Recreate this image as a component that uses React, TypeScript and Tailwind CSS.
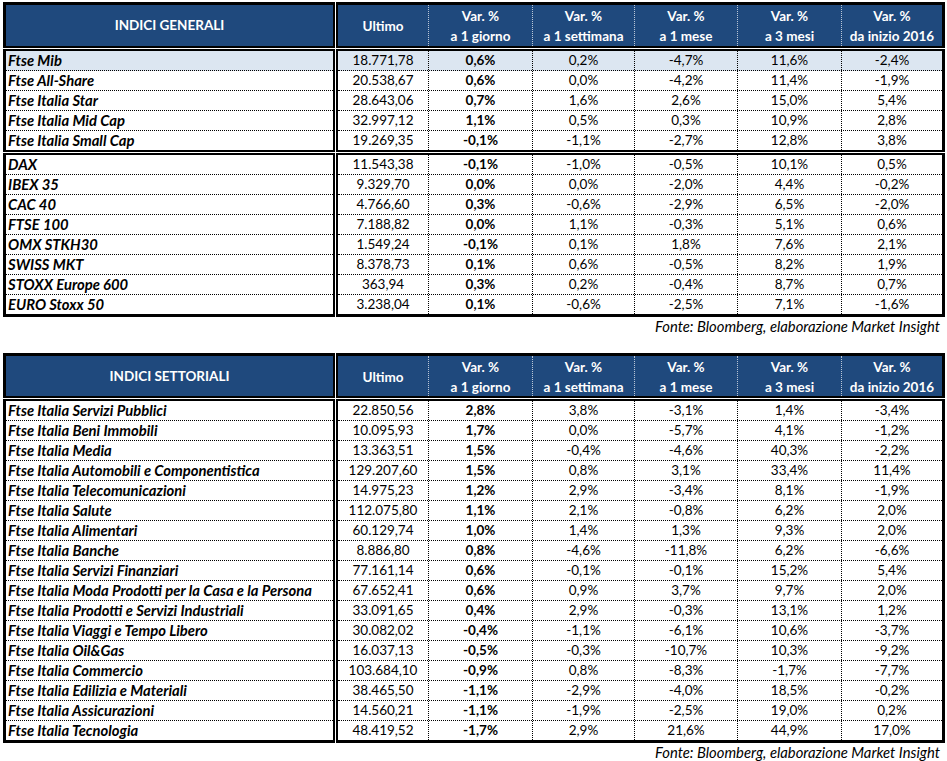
import React from 'react';

type Row = { name: string; values: string[]; highlight?: boolean };

const COLS = ['w-[91px]', 'w-[104px]', 'w-[102px]', 'w-[103px]', 'w-[104px]', 'w-[100px]'];

const HEAD: { top?: string; bottom: string }[] = [
    { bottom: 'Ultimo' },
    { top: 'Var. %', bottom: 'a 1 giorno' },
    { top: 'Var. %', bottom: 'a 1 settimana' },
    { top: 'Var. %', bottom: 'a 1 mese' },
    { top: 'Var. %', bottom: 'a 3 mesi' },
    { top: 'Var. %', bottom: 'da inizio 2016' },
];

const GENERALI: Row[][] = [
    [
        { name: 'Ftse Mib', values: ['18.771,78', '0,6%', '0,2%', '-4,7%', '11,6%', '-2,4%'], highlight: true },
        { name: 'Ftse All-Share', values: ['20.538,67', '0,6%', '0,0%', '-4,2%', '11,4%', '-1,9%'] },
        { name: 'Ftse Italia Star', values: ['28.643,06', '0,7%', '1,6%', '2,6%', '15,0%', '5,4%'] },
        { name: 'Ftse Italia Mid Cap', values: ['32.997,12', '1,1%', '0,5%', '0,3%', '10,9%', '2,8%'] },
        { name: 'Ftse Italia Small Cap', values: ['19.269,35', '-0,1%', '-1,1%', '-2,7%', '12,8%', '3,8%'] },
    ],
    [
        { name: 'DAX', values: ['11.543,38', '-0,1%', '-1,0%', '-0,5%', '10,1%', '0,5%'] },
        { name: 'IBEX 35', values: ['9.329,70', '0,0%', '0,0%', '-2,0%', '4,4%', '-0,2%'] },
        { name: 'CAC 40', values: ['4.766,60', '0,3%', '-0,6%', '-2,9%', '6,5%', '-2,0%'] },
        { name: 'FTSE 100', values: ['7.188,82', '0,0%', '1,1%', '-0,3%', '5,1%', '0,6%'] },
        { name: 'OMX STKH30', values: ['1.549,24', '-0,1%', '0,1%', '1,8%', '7,6%', '2,1%'] },
        { name: 'SWISS MKT', values: ['8.378,73', '0,1%', '0,6%', '-0,5%', '8,2%', '1,9%'] },
        { name: 'STOXX Europe 600', values: ['363,94', '0,3%', '0,2%', '-0,4%', '8,7%', '0,7%'] },
        { name: 'EURO Stoxx 50', values: ['3.238,04', '0,1%', '-0,6%', '-2,5%', '7,1%', '-1,6%'] },
    ],
];

const SETTORIALI: Row[][] = [
    [
        { name: 'Ftse Italia Servizi Pubblici', values: ['22.850,56', '2,8%', '3,8%', '-3,1%', '1,4%', '-3,4%'] },
        { name: 'Ftse Italia Beni Immobili', values: ['10.095,93', '1,7%', '0,0%', '-5,7%', '4,1%', '-1,2%'] },
        { name: 'Ftse Italia Media', values: ['13.363,51', '1,5%', '-0,4%', '-4,6%', '40,3%', '-2,2%'] },
        { name: 'Ftse Italia Automobili e Componentistica', values: ['129.207,60', '1,5%', '0,8%', '3,1%', '33,4%', '11,4%'] },
        { name: 'Ftse Italia Telecomunicazioni', values: ['14.975,23', '1,2%', '2,9%', '-3,4%', '8,1%', '-1,9%'] },
        { name: 'Ftse Italia Salute', values: ['112.075,80', '1,1%', '2,1%', '-0,8%', '6,2%', '2,0%'] },
        { name: 'Ftse Italia Alimentari', values: ['60.129,74', '1,0%', '1,4%', '1,3%', '9,3%', '2,0%'] },
        { name: 'Ftse Italia Banche', values: ['8.886,80', '0,8%', '-4,6%', '-11,8%', '6,2%', '-6,6%'] },
        { name: 'Ftse Italia Servizi Finanziari', values: ['77.161,14', '0,6%', '-0,1%', '-0,1%', '15,2%', '5,4%'] },
        { name: 'Ftse Italia Moda Prodotti per la Casa e la Persona', values: ['67.652,41', '0,6%', '0,9%', '3,7%', '9,7%', '2,0%'] },
        { name: 'Ftse Italia Prodotti e Servizi Industriali', values: ['33.091,65', '0,4%', '2,9%', '-0,3%', '13,1%', '1,2%'] },
        { name: 'Ftse Italia Viaggi e Tempo Libero', values: ['30.082,02', '-0,4%', '-1,1%', '-6,1%', '10,6%', '-3,7%'] },
        { name: 'Ftse Italia Oil&Gas', values: ['16.037,13', '-0,5%', '-0,3%', '-10,7%', '10,3%', '-9,2%'] },
        { name: 'Ftse Italia Commercio', values: ['103.684,10', '-0,9%', '0,8%', '-8,3%', '-1,7%', '-7,7%'] },
        { name: 'Ftse Italia Edilizia e Materiali', values: ['38.465,50', '-1,1%', '-2,9%', '-4,0%', '18,5%', '-0,2%'] },
        { name: 'Ftse Italia Assicurazioni', values: ['14.560,21', '-1,1%', '-1,9%', '-2,5%', '19,0%', '0,2%'] },
        { name: 'Ftse Italia Tecnologia', values: ['48.419,52', '-1,7%', '2,9%', '21,6%', '44,9%', '17,0%'] },
    ],
];

const Band: React.FC<{ rows: Row[]; edge: string }> = ({ rows, edge }) => (
    <div className="flex gap-px">
        {/* Label column */}
        <div className={`w-[332px] border-l-[3px] border-r-2 border-t-2 border-black ${edge}`}>
            {rows.map((row, i) => (
                <div
                    key={row.name}
                    className={`flex items-center pl-[2px] text-[14.8px] font-bold italic whitespace-nowrap ${i < rows.length - 1 ? 'h-[20px] border-b border-dotted border-black' : 'h-[19px]'} ${row.highlight ? 'bg-[#dce6f1]' : ''}`}
                >
                    {row.name}
                </div>
            ))}
        </div>
        {/* Numbers */}
        <div className={`w-[609px] border-l-2 border-r-[3px] border-t-2 border-black ${edge}`}>
            {rows.map((row, i) => (
                <div
                    key={row.name}
                    className={`flex ${i < rows.length - 1 ? 'h-[20px] border-b border-dotted border-black' : 'h-[19px]'} ${row.highlight ? 'bg-[#dce6f1]' : ''}`}
                >
                    {row.values.map((v, j) => (
                        <div
                            key={j}
                            className={`${COLS[j]} flex items-center justify-center ${j < 5 ? 'border-r border-dotted border-black' : ''} ${j === 1 ? 'font-bold' : ''}`}
                        >
                            {v}
                        </div>
                    ))}
                </div>
            ))}
        </div>
    </div>
);

const IndexTable: React.FC<{ title: string; groups: Row[][]; headHeight: string }> = ({ title, groups, headHeight }) => (
    <div className="flex flex-col gap-px">
        {/* Header */}
        <div className="flex gap-px">
            <div className={`w-[332px] ${headHeight} border-l-[3px] border-r-2 border-t-[3px] border-b-2 border-black bg-[#1f497d] flex items-center justify-center font-bold text-white`}>
                {title}
            </div>
            <div className={`w-[609px] ${headHeight} border-l-2 border-r-[3px] border-t-[3px] border-b-2 border-black bg-[#1f497d] flex font-bold text-white`}>
                {HEAD.map((h, j) => (
                    <div
                        key={j}
                        className={`${COLS[j]} flex flex-col justify-center items-center pt-px ${j < 5 ? 'border-r border-dotted border-white/70' : ''}`}
                    >
                        {h.top && <span className="h-[20px] leading-[20px]">{h.top}</span>}
                        <span className="h-[20px] leading-[20px]">{h.bottom}</span>
                    </div>
                ))}
            </div>
        </div>
        {groups.map((rows, g) => (
            <Band key={g} rows={rows} edge={g === groups.length - 1 ? 'border-b-[3px]' : 'border-b-2'} />
        ))}
    </div>
);

const Source: React.FC = () => (
    <div className="w-[941px] h-[18px] flex items-center justify-end pr-[4px] text-[14.8px] italic">
        Fonte: Bloomberg, elaborazione Market Insight
    </div>
);

const App: React.FC = () => {
    return (
        <div className="bg-white w-[947px] h-[761px] pl-[3px] pt-[2px] text-black text-[13.5px]" style={{ fontFamily: 'Lato, "Open Sans", sans-serif' }}>
            <IndexTable title="INDICI GENERALI" groups={GENERALI} headHeight="h-[46px]" />
            <Source />
            <div className="h-[18px]" />
            <IndexTable title="INDICI SETTORIALI" groups={SETTORIALI} headHeight="h-[45px]" />
            <Source />
        </div>
    );
};

export default App;
